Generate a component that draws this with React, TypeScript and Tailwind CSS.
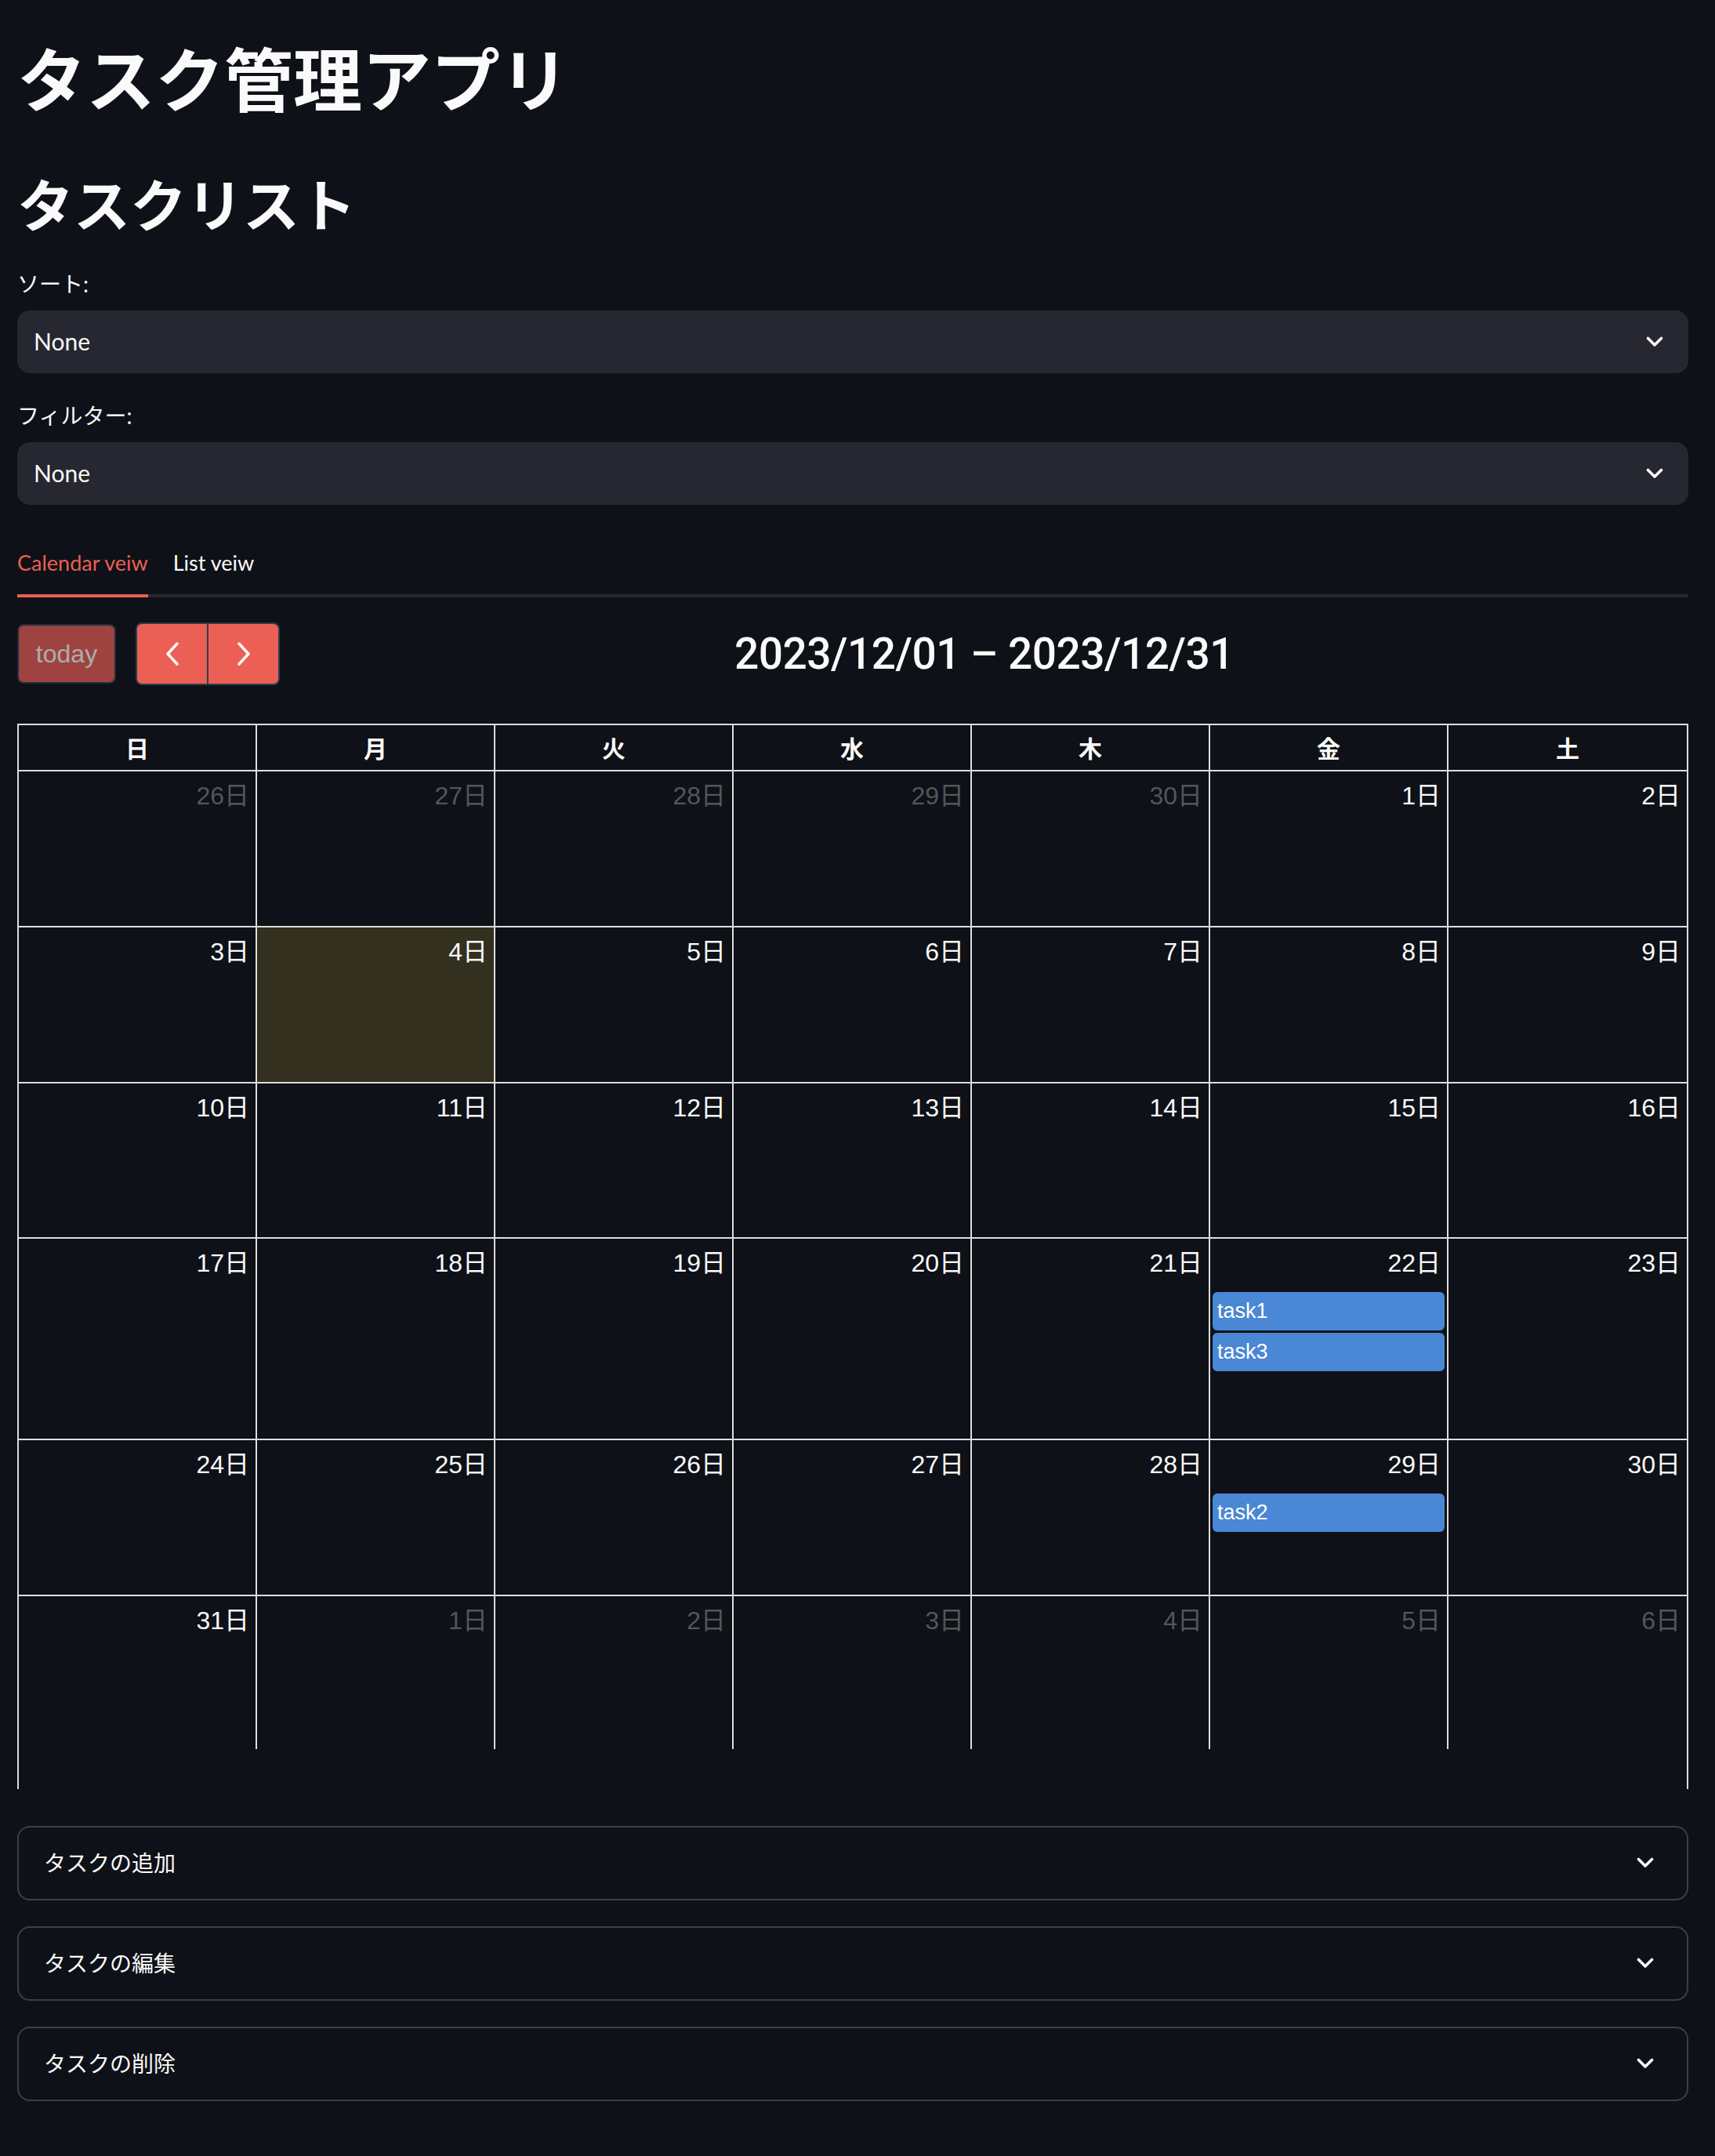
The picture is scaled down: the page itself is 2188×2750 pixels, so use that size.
import React from "react";

type Day = { n: number; other?: boolean; today?: boolean; events?: string[] };

const weeks: Day[][] = [
  [
    { n: 26, other: true },
    { n: 27, other: true },
    { n: 28, other: true },
    { n: 29, other: true },
    { n: 30, other: true },
    { n: 1 },
    { n: 2 },
  ],
  [{ n: 3 }, { n: 4, today: true }, { n: 5 }, { n: 6 }, { n: 7 }, { n: 8 }, { n: 9 }],
  [{ n: 10 }, { n: 11 }, { n: 12 }, { n: 13 }, { n: 14 }, { n: 15 }, { n: 16 }],
  [
    { n: 17 },
    { n: 18 },
    { n: 19 },
    { n: 20 },
    { n: 21 },
    { n: 22, events: ["task1", "task3"] },
    { n: 23 },
  ],
  [
    { n: 24 },
    { n: 25 },
    { n: 26 },
    { n: 27 },
    { n: 28 },
    { n: 29, events: ["task2"] },
    { n: 30 },
  ],
  [
    { n: 31 },
    { n: 1, other: true },
    { n: 2, other: true },
    { n: 3, other: true },
    { n: 4, other: true },
    { n: 5, other: true },
    { n: 6, other: true },
  ],
];

const rowClasses = [
  "h-[199px] border-b-2 border-[#dddddd]",
  "h-[199px] border-b-2 border-[#dddddd]",
  "h-[198px] border-b-2 border-[#dddddd]",
  "h-[257px] border-b-2 border-[#dddddd]",
  "h-[199px] border-b-2 border-[#dddddd]",
  "h-[195px]",
];

const dow = ["日", "月", "火", "水", "木", "金", "土"];

function Chevron() {
  return (
    <svg width="22" height="14" viewBox="0 0 22 14" fill="none">
      <path
        d="M2.5 2.5 L11 11 L19.5 2.5"
        stroke="#fafafa"
        strokeWidth="3.6"
        strokeLinecap="round"
        strokeLinejoin="round"
      />
    </svg>
  );
}

function NavArrow({ dir }: { dir: "left" | "right" }) {
  return (
    <svg width="18" height="30" viewBox="0 0 18 30" fill="none">
      <path
        d={dir === "left" ? "M15 2 L3 15 L15 28" : "M3 2 L15 15 L3 28"}
        stroke="#ffffff"
        strokeWidth="3.4"
        strokeLinecap="round"
        strokeLinejoin="round"
      />
    </svg>
  );
}

function SelectBox() {
  return (
    <div className="flex h-[80px] items-center justify-between rounded-[16px] bg-[#262730] pl-[21px] pr-[32px]">
      <span className="text-[30px]">None</span>
      <Chevron />
    </div>
  );
}

function Expander({ label }: { label: string }) {
  return (
    <div className="flex h-[95px] items-center justify-between rounded-[16px] border-2 border-[#3d3f45] pl-[32px] pr-[42px]">
      <span className="text-[28px]">{label}</span>
      <Chevron />
    </div>
  );
}

export default function App() {
  return (
    <div className="min-h-screen bg-[#0e1117] text-[#fafafa] font-['Lato','Noto_Sans_CJK_JP',sans-serif]">
      <div className="pl-[22px] pr-[34px] pb-[60px]">
        <h1 className="pt-[44px] text-[88px] leading-[1.2] font-bold font-['Noto_Sans_CJK_JP',sans-serif]">
          タスク管理アプリ
        </h1>
        <h2 className="mt-[65px] text-[72px] leading-[1.2] font-bold font-['Noto_Sans_CJK_JP',sans-serif]">
          タスクリスト
        </h2>

        <div className="mt-[40px] text-[28px] leading-[42px]">ソート:</div>
        <div className="mt-[13px]">
          <SelectBox />
        </div>

        <div className="mt-[33px] text-[28px] leading-[42px]">フィルター:</div>
        <div className="mt-[13px]">
          <SelectBox />
        </div>

        {/* Tabs */}
        <div className="mt-[34px] flex h-[84px] gap-[32px] border-b-4 border-[#262730] text-[27px]">
          <div className="relative flex h-[80px] items-center text-[#ec5f55]">
            Calendar veiw
            <div className="absolute left-0 right-0 bottom-[-4px] h-[4px] bg-[#ec5f55]" />
          </div>
          <div className="flex h-[80px] items-center">List veiw</div>
        </div>

        {/* Calendar toolbar */}
        <div className="mt-[32px] flex h-[80px] items-center font-['Liberation_Sans','Noto_Sans_CJK_JP',sans-serif]">
          <div className="flex items-center gap-[25px]">
            <button className="h-[76px] w-[126px] rounded-[8px] border-2 border-[#2c3e50] bg-[#ec5f55] text-[32px] text-white opacity-[0.65]">
              today
            </button>
            <div className="flex h-[80px] overflow-hidden rounded-[8px] border-2 border-[#2c3e50]">
              <button className="flex w-[89px] items-center justify-center bg-[#ec5f55]">
                <NavArrow dir="left" />
              </button>
              <div className="w-[2px] bg-[#2c3e50]" />
              <button className="flex w-[89px] items-center justify-center bg-[#ec5f55]">
                <NavArrow dir="right" />
              </button>
            </div>
          </div>
          <h2 className="flex-1 text-center text-[55px] leading-[1.2] tracking-[-0.5px] font-medium font-['Roboto',sans-serif]">
            2023/12/01 – 2023/12/31
          </h2>
        </div>

        {/* Calendar grid */}
        <div className="mt-[49px] border-l-2 border-r-2 border-t-2 border-[#dddddd] font-['Liberation_Sans','Noto_Sans_CJK_JP',sans-serif]">
          <div className="grid h-[59px] grid-cols-7 border-b-2 border-[#dddddd]">
            {dow.map((d, i) => (
              <div
                key={d}
                className={
                  i < 6
                    ? "flex items-center justify-center border-r-2 border-[#dddddd] text-[30px] font-bold font-['Noto_Sans_CJK_JP',sans-serif]"
                    : "flex items-center justify-center text-[30px] font-bold font-['Noto_Sans_CJK_JP',sans-serif]"
                }
              >
                {d}
              </div>
            ))}
          </div>
          {weeks.map((w, wi) => (
            <div key={wi} className={"grid grid-cols-7 " + rowClasses[wi]}>
              {w.map((d, di) => (
                <div
                  key={di}
                  className={
                    (di < 6 ? "border-r-2 border-[#dddddd] " : "") +
                    (d.today ? "bg-[#33301f]" : "")
                  }
                >
                  <div
                    className={
                      d.other
                        ? "pt-[13px] pr-[8px] text-right text-[32px] leading-[36px] text-[#53565b]"
                        : "pt-[13px] pr-[8px] text-right text-[32px] leading-[36px] text-[#fafafa]"
                    }
                  >
                    {d.n}日
                  </div>
                  {d.events && (
                    <div className="mt-[19px] flex flex-col gap-[3px] px-[3px]">
                      {d.events.map((e) => (
                        <div
                          key={e}
                          className="h-[49px] rounded-[6px] bg-[#4a87d4] px-[6px] text-[27px] leading-[49px] text-white"
                        >
                          {e}
                        </div>
                      ))}
                    </div>
                  )}
                </div>
              ))}
            </div>
          ))}
          <div className="h-[51px]" />
        </div>

        {/* Expanders */}
        <div className="mt-[47px] flex flex-col gap-[33px]">
          <Expander label="タスクの追加" />
          <Expander label="タスクの編集" />
          <Expander label="タスクの削除" />
        </div>
      </div>
    </div>
  );
}
